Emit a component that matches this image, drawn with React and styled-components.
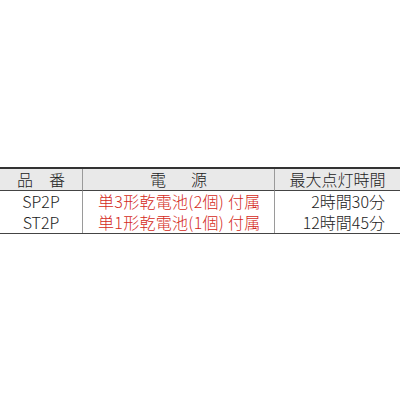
import * as React from 'react'
import styled, { createGlobalStyle } from 'styled-components'

const GlobalStyle = createGlobalStyle`
  html, body {
    margin: 0;
    padding: 0;
    background: #ffffff;
  }
  body {
    font-family: "Noto Sans CJK JP", "Noto Sans", sans-serif;
  }
`

const Page = styled.div`
  width: 400px;
  height: 400px;
  display: flex;
  align-items: center;
`

const Table = styled.div`
  width: 100%;
  display: grid;
  grid-template-columns: 82px 192px 1fr;
  border-top: 2px solid #333;
  border-bottom: 1.5px solid #444;
  color: #222;
`

const Cell = styled.div`
  height: 21px;
  line-height: 21px;
  display: flex;
  align-items: center;
  justify-content: ${(p) => p.$align || 'center'};
  padding-left: ${(p) => (p.$align === 'flex-start' ? '15px' : p.$spread || '0')};
  padding-right: ${(p) => (p.$align === 'flex-end' ? '15px' : '0')};
  font-size: 16px;
  font-weight: 300;
  white-space: nowrap;
  background: ${(p) => (p.$head ? '#e9e9e9' : 'transparent')};
  border-bottom: ${(p) => (p.$head ? '1px solid #444' : 'none')};
  border-left: ${(p) => (p.$first ? 'none' : '1px solid #9a9a9a')};
  color: ${(p) => (p.$red ? '#d42a22' : '#222')};
  letter-spacing: ${(p) => p.$spread || (p.$red ? '0.3px' : 'normal')};
`

const rows = [
  { code: 'SP2P', power: '単3形乾電池(2個) 付属', time: '2時間30分' },
  { code: 'ST2P', power: '単1形乾電池(1個) 付属', time: '12時間45分' }
]

const App = () => (
  <>
    <GlobalStyle />
    <Page>
      <Table>
        <Cell $head $first $spread="16px">品番</Cell>
        <Cell $head $spread="25px">電源</Cell>
        <Cell $head>最大点灯時間</Cell>
        {rows.map((r) => (
          <React.Fragment key={r.code}>
            <Cell $first>{r.code}</Cell>
            <Cell $red $align="flex-start">{r.power}</Cell>
            <Cell $align="flex-end">{r.time}</Cell>
          </React.Fragment>
        ))}
      </Table>
    </Page>
  </>
)

export default App
